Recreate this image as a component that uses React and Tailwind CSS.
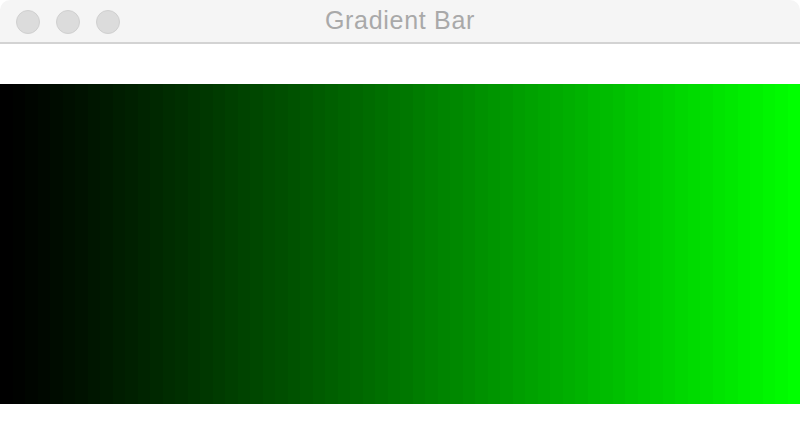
import React from "react";

const BANDS = 64;

function Band({ i }) {
  const t = i / (BANDS - 1);
  const g = Math.round(255 * Math.pow(t, 1.12));
  return <div className="h-full flex-1" style={{ backgroundColor: `rgb(0, ${g}, 0)` }} />;
}

export default function App() {
  return (
    <div className="w-[800px] h-[444px] bg-white flex flex-col overflow-hidden" style={{ fontFamily: '"Liberation Sans", Arial, sans-serif' }}>
      <div className="h-[44px] shrink-0 rounded-t-[10px] bg-[#f5f5f5] border-b-2 border-[#d3d3d3] relative flex items-center justify-center">
        <div className="absolute left-[16px] top-[10px] flex gap-[16px]">
          <div className="w-[24px] h-[24px] rounded-full bg-[#dcdcdc] border border-[#d0d0d0]" />
          <div className="w-[24px] h-[24px] rounded-full bg-[#dcdcdc] border border-[#d0d0d0]" />
          <div className="w-[24px] h-[24px] rounded-full bg-[#dcdcdc] border border-[#d0d0d0]" />
        </div>
        <span className="text-[25px] tracking-[0.7px] text-[#a9a9a9] leading-none mt-[-1px]">Gradient Bar</span>
      </div>
      <div className="h-[40px] shrink-0" />
      <div className="h-[320px] shrink-0 flex">
        {Array.from({ length: BANDS }, (_, i) => (
          <Band key={i} i={i} />
        ))}
      </div>
      <div className="flex-1" />
    </div>
  );
}
